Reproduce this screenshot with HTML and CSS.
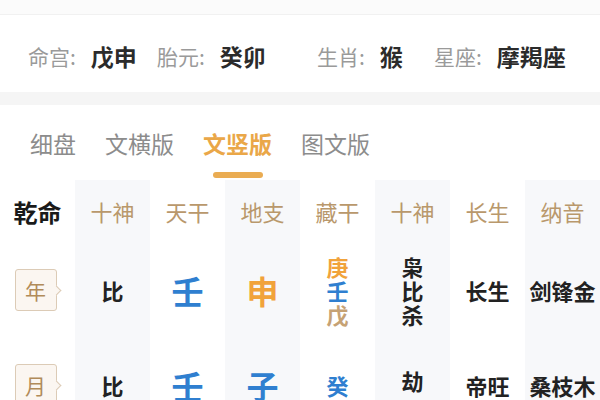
FILE: index.html
```html
<!DOCTYPE html>
<html lang="zh">
<head>
<meta charset="utf-8">
<link rel="stylesheet" href="styles.css">
</head>
<body>
<div class="page">
  <div class="topstrip"></div>
  <div class="info">
    <div class="item"><span class="lbl">命宫:</span><span class="val">戊申</span></div>
    <div class="item"><span class="lbl">胎元:</span><span class="val">癸卯</span></div>
    <div class="item"><span class="lbl">生肖:</span><span class="val">猴</span></div>
    <div class="item"><span class="lbl">星座:</span><span class="val">摩羯座</span></div>
  </div>
  <div class="band"></div>
  <div class="tabs">
    <div class="tab"><span class="tt">细盘</span><span class="ul"></span></div>
    <div class="tab"><span class="tt">文横版</span><span class="ul"></span></div>
    <div class="tab active"><span class="tt">文竖版</span><span class="ul"></span></div>
    <div class="tab"><span class="tt">图文版</span><span class="ul"></span></div>
  </div>
  <div class="table">
    <div class="col">
      <div class="h main">乾命</div>
      <div class="c"><span class="pillar">年</span></div>
      <div class="c"><span class="pillar">月</span></div>
    </div>
    <div class="col alt">
      <div class="h">十神</div>
      <div class="c b">比</div>
      <div class="c b">比</div>
    </div>
    <div class="col">
      <div class="h">天干</div>
      <div class="c big blue">壬</div>
      <div class="c big blue">壬</div>
    </div>
    <div class="col alt">
      <div class="h">地支</div>
      <div class="c big orange">申</div>
      <div class="c big blue">子</div>
    </div>
    <div class="col">
      <div class="h">藏干</div>
      <div class="c stack"><span class="orange">庚</span><span class="blue">壬</span><span class="brown">戊</span></div>
      <div class="c stack"><span class="blue">癸</span></div>
    </div>
    <div class="col alt">
      <div class="h">十神</div>
      <div class="c stack b"><span>枭</span><span>比</span><span>杀</span></div>
      <div class="c stack b up"><span>劫</span></div>
    </div>
    <div class="col">
      <div class="h">长生</div>
      <div class="c b">长生</div>
      <div class="c b">帝旺</div>
    </div>
    <div class="col alt">
      <div class="h">纳音</div>
      <div class="c b">剑锋金</div>
      <div class="c b">桑枝木</div>
    </div>
  </div>
</div>
</body>
</html>
```
FILE: styles.css
```css
* { box-sizing: border-box; }
html, body { margin: 0; padding: 0; }
body {
  width: 600px;
  height: 400px;
  overflow: hidden;
  background: #ffffff;
  font-family: "Noto Sans CJK SC", "Noto Sans", sans-serif;
  color: #222;
}
.page { width: 600px; }
.topstrip {
  height: 15px;
  background: #fbfbfb;
  border-bottom: 1px solid #f1f1f1;
}
.info {
  height: 77px;
  display: grid;
  grid-template-columns: 129px 160px 117px auto;
  align-items: center;
  padding-left: 28px;
  padding-top: 4px;
}
.item { display: flex; align-items: center; white-space: nowrap; }
.lbl {
  font-size: 21px;
  color: #9a9a9a;
  margin-right: 15px;
}
.val {
  font-size: 23px;
  font-weight: 700;
  color: #2b2b2b;
}
.band { height: 13px; background: #f5f5f5; }
.tabs {
  height: 75px;
  display: flex;
  gap: 29px;
  padding: 22px 0 0 30px;
}
.tab {
  display: flex;
  flex-direction: column;
  align-items: center;
}
.tt {
  font-size: 23px;
  line-height: 32px;
  color: #8c8c8c;
}
.ul {
  width: 0;
  height: 6px;
  margin-top: 13px;
  border-radius: 3px;
}
.tab.active .tt { color: #eaa748; font-weight: 700; }
.tab.active .ul { width: 50px; background: #eaac52; }
.table {
  display: grid;
  grid-template-columns: repeat(8, 75px);
}
.col { display: flex; flex-direction: column; }
.col.alt { background: #f7f8fa; }
.h {
  height: 62px;
  display: flex;
  align-items: center;
  justify-content: center;
  font-size: 22px;
  color: #b9986c;
}
.h.main { color: #1a1a1a; font-weight: 700; font-size: 24px; }
.c {
  height: 95px;
  display: flex;
  align-items: center;
  justify-content: center;
  font-size: 22px;
  white-space: nowrap;
}
.b { font-weight: 700; color: #222; }
.big { font-size: 32px; font-weight: 700; }
.blue { color: #2f7fd0; }
.orange { color: #f1a33b; }
.brown { color: #c6a274; }
.stack {
  flex-direction: column;
  line-height: 24px;
  font-size: 22px;
  font-weight: 700;
}
.stack.up { padding-bottom: 10px; }
.pillar {
  position: relative;
  width: 42px;
  height: 42px;
  margin-right: 4px;
  display: flex;
  align-items: center;
  justify-content: center;
  background: #fbf6f1;
  border: 1px solid #dccbb6;
  border-radius: 3px;
  color: #b18b5a;
  font-size: 21px;
}
.pillar::after {
  content: "";
  position: absolute;
  right: -4px;
  top: 17px;
  width: 6px;
  height: 6px;
  background: #fbf6f1;
  border-top: 1px solid #dccbb6;
  border-right: 1px solid #dccbb6;
  transform: rotate(45deg);
}
```
